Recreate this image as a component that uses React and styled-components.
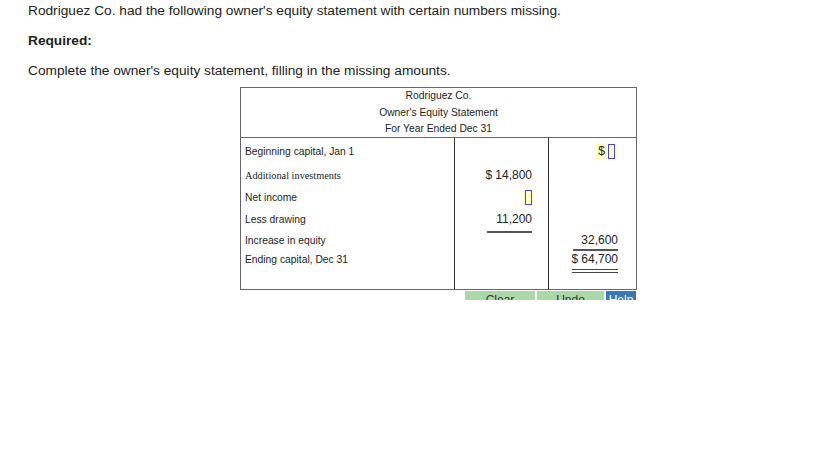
import React from "react";
import styled, { createGlobalStyle } from "styled-components";

const GlobalStyle = createGlobalStyle`
  body {
    margin: 0;
    background: #fff;
    font-family: "Liberation Sans", Arial, sans-serif;
    color: #222;
  }
`;

const Page = styled.div`
  padding: 2px 0 0 28px;
`;

const Para = styled.p`
  margin: 0;
  font-size: 13.7px;
  line-height: 18px;
  font-weight: ${(p) => (p.bold ? "bold" : "normal")};
  margin-bottom: ${(p) => p.gap || 0}px;
`;

const Statement = styled.div`
  margin: 7px 0 0 212px;
  width: 395px;
  border: 1px solid #666;
  font-size: 10.3px;
`;

const Heading = styled.div`
  height: 48px;
  border-bottom: 1px solid #666;
  display: flex;
  flex-direction: column;
  align-items: center;
  justify-content: center;
  padding-top: 1px;
  line-height: 16.5px;
`;

const Row = styled.div`
  display: grid;
  grid-template-columns: 213px 94px 1fr;
  grid-template-rows: ${(p) => p.h}px;
`;

const Label = styled.div`
  display: flex;
  align-items: center;
  padding-left: 4px;
  font-family: ${(p) =>
    p.serif ? '"Liberation Serif", "Times New Roman", serif' : "inherit"};
`;

const Amount = styled.div`
  border-left: 1px solid #333;
  display: flex;
  align-items: center;
  justify-content: flex-end;
  padding-right: ${(p) => p.pr || 16}px;
`;

const Figure = styled.span`
  display: inline-block;
  text-align: right;
  font-size: 12px;
  line-height: 13px;
  min-width: ${(p) => (p.line ? 45 : 0)}px;
  padding-bottom: ${(p) => p.below || 0}px;
  margin-bottom: ${(p) => (p.line ? -(p.below + (p.line === "double" ? 4 : 2)) : 0)}px;
  border-bottom: ${(p) =>
    p.line === "double" ? "4px double #444" : p.line ? "2px solid #555" : "none"};
`;

const Dollar = styled.span`
  margin-right: 3px;
`;

const Blank = styled.span`
  display: inline-flex;
  align-items: center;
  background: #ffffc8;
  padding: 0 2px;
  height: 17px;
  font-size: 12px;
`;

const Box = styled.span`
  display: inline-block;
  width: 5px;
  height: 13px;
  border: 1px solid #4646e6;
  margin-left: ${(p) => (p.after ? 3 : 0)}px;
`;

const Buttons = styled.div`
  display: flex;
  gap: 2px;
  margin: 1px 0 0 437px;
  height: 9px;
  overflow: hidden;
`;

const Button = styled.div`
  width: ${(p) => p.w}px;
  height: 22px;
  background: ${(p) => (p.primary ? "#3a79b8" : "#aad8a8")};
  color: ${(p) => (p.primary ? "#fff" : "#333")};
  font-size: 12px;
  line-height: 14px;
  padding-top: 2px;
  text-align: center;
  box-sizing: border-box;
`;

export default function App() {
  return (
    <>
      <GlobalStyle />
      <Page>
        <Para gap={12}>
          Rodriguez Co. had the following owner's equity statement with certain numbers missing.
        </Para>
        <Para bold gap={12}>
          Required:
        </Para>
        <Para>Complete the owner's equity statement, filling in the missing amounts.</Para>

        <Statement>
          <Heading>
            <div>Rodriguez Co.</div>
            <div>Owner's Equity Statement</div>
            <div>For Year Ended Dec 31</div>
          </Heading>
          <Row h={26}>
            <Label>Beginning capital, Jan 1</Label>
            <Amount />
            <Amount pr={19}>
              <Blank>
                $<Box after />
              </Blank>
            </Amount>
          </Row>
          <Row h={22}>
            <Label serif>Additional investments</Label>
            <Amount>
              <Figure>
                <Dollar>$</Dollar>14,800
              </Figure>
            </Amount>
            <Amount />
          </Row>
          <Row h={22}>
            <Label>Net income</Label>
            <Amount pr={14}>
              <Blank>
                <Box />
              </Blank>
            </Amount>
            <Amount />
          </Row>
          <Row h={22}>
            <Label>Less drawing</Label>
            <Amount>
              <Figure line="single" below={5}>
                11,200
              </Figure>
            </Amount>
            <Amount />
          </Row>
          <Row h={20}>
            <Label>Increase in equity</Label>
            <Amount />
            <Amount pr={18}>
              <Figure line="single" below={2}>
                32,600
              </Figure>
            </Amount>
          </Row>
          <Row h={19}>
            <Label>Ending capital, Dec 31</Label>
            <Amount />
            <Amount pr={18}>
              <Figure line="double" below={3}>
                <Dollar>$</Dollar>64,700
              </Figure>
            </Amount>
          </Row>
          <Row h={20}>
            <Label />
            <Amount />
            <Amount />
          </Row>
        </Statement>

        <Buttons>
          <Button w={70}>Clear</Button>
          <Button w={67}>Undo</Button>
          <Button w={30} primary>
            Help
          </Button>
        </Buttons>
      </Page>
    </>
  );
}
